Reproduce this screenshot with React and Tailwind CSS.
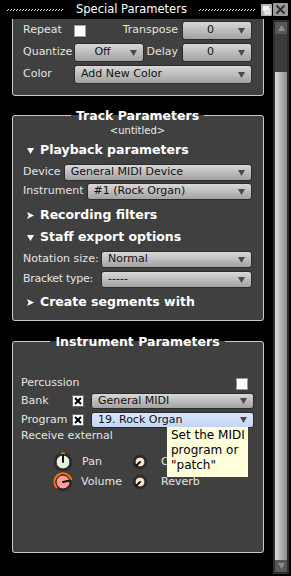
import React from 'react';

const Arrow = () => (
  <svg width="7" height="6" viewBox="0 0 7 6">
    <path d="M0 0H7L3.5 6Z" fill="#4a4a4a" />
  </svg>
);

const Down = () => (
  <svg width="7" height="6" viewBox="0 0 7 6">
    <path d="M0 0H7L3.5 6Z" fill="#ffffff" />
  </svg>
);

const Right = () => (
  <svg width="7" height="7" viewBox="0 0 7 7">
    <path d="M0 0L7 3.5L0 7L1.6 3.5Z" fill="#ffffff" />
  </svg>
);

function Combo({ children, className = '', center = false, blue = false }) {
  return (
    <div
      className={`flex items-center rounded-[3px] border border-[#2c2c2c] text-[11px] text-[#111] ${
        blue ? 'bg-linear-to-b from-[#d9e6fb] to-[#c3d6f5]' : 'bg-linear-to-b from-[#d8d8d8] to-[#a2a2a2]'
      } ${className}`}
    >
      <span className={`flex-1 truncate ${center ? 'text-center' : 'pl-[6px]'}`}>{children}</span>
      <span className="flex pr-[6px]">
        <Arrow />
      </span>
    </div>
  );
}

const Check = () => <div className="w-[12px] h-[12px] bg-white border border-[#9a9a9a]" />;

const XCheck = () => (
  <svg width="12" height="12" viewBox="0 0 12 12">
    <rect x="0.5" y="0.5" width="11" height="11" fill="#fff" stroke="#6a6a6a" />
    <path d="M3 3L9 9M9 3L3 9" stroke="#000" strokeWidth="2" />
  </svg>
);

function Section({ open, children }) {
  return (
    <div className="flex items-center h-[17px] ml-[4px] gap-[6px] text-[12.5px] font-bold text-white">
      {open ? <Down /> : <Right />}
      <span>{children}</span>
    </div>
  );
}

function pt(c, r, a) {
  const t = (a * Math.PI) / 180;
  return [c + r * Math.sin(t), c - r * Math.cos(t)];
}

function arc(c, r, a0, a1) {
  const [x0, y0] = pt(c, r, a0);
  const [x1, y1] = pt(c, r, a1);
  const large = a1 - a0 > 180 ? 1 : 0;
  return `M${x0} ${y0}A${r} ${r} 0 ${large} 1 ${x1} ${y1}`;
}

function Knob({ size, fill, angle, arcFrom, arcTo }) {
  const c = size / 2;
  const [px, py] = pt(c, c - 3, angle);
  return (
    <svg width={size} height={size} viewBox={`0 0 ${size} ${size}`}>
      <circle cx={c} cy={c} r={c - 0.5} fill="#2e2e2e" />
      {arcFrom !== undefined && (
        <path d={arc(c, c - 1.5, arcFrom, arcTo)} stroke="#ff6a10" strokeWidth="2.2" fill="none" />
      )}
      <circle cx={c} cy={c} r={c - 3} fill={fill} stroke="#151515" strokeWidth="1" />
      <line x1={c} y1={c} x2={px} y2={py} stroke="#111" strokeWidth="2" strokeLinecap="round" />
    </svg>
  );
}

const Dots = ({ w }) => (
  <svg width={w} height="4" viewBox={`0 0 ${w} 4`}>
    {Array.from({ length: Math.floor(w / 3) }).map((_, i) => (
      <g key={i} fill="#e8e8e8">
        <rect x={i * 3} y="2" width="1" height="1" />
        <rect x={i * 3 + 1} y="1" width="1" height="1" />
      </g>
    ))}
  </svg>
);

export default function App() {
  return (
    <div className="relative w-[291px] h-[576px] bg-black flex flex-col overflow-hidden font-['DejaVu_Sans',sans-serif] text-[#e4e4e4] text-[11px]">
      {/* title bar */}
      <div className="h-[19px] flex items-center pl-[7px]">
        <Dots w={57} />
        <span className="ml-[12px] text-[11.5px] text-white">Special Parameters</span>
        <span className="ml-[12px] flex">
          <Dots w={57} />
        </span>
        <div className="ml-auto mr-[3px] flex items-center gap-[1px]">
          <svg width="11" height="12" viewBox="0 0 11 12">
            <rect width="11" height="12" rx="1" fill="#b4b4b4" />
            <rect x="2" y="2" width="6" height="5" fill="#f4f4f4" />
            <rect x="4" y="5" width="5" height="5" fill="#dcdcdc" stroke="#f4f4f4" />
          </svg>
          <svg width="15" height="13" viewBox="0 0 15 13">
            <rect width="15" height="13" rx="1" fill="#9a9a9a" />
            <path d="M3.5 2.5L11.5 10.5M11.5 2.5L3.5 10.5" stroke="#2e2e2e" strokeWidth="1.8" />
          </svg>
        </div>
      </div>

      <div className="flex flex-1 min-h-0">
        {/* content */}
        <div className="flex-1 overflow-hidden pl-[12px] pr-[9px]">
          {/* top group */}
          <div className="-mt-[10px] border border-[#c8c8c8] rounded-[3px] bg-[#404040] pt-[11px] pb-[11px] pl-[10px] pr-[11px] flex flex-col gap-[3px]">
            <div className="flex items-center h-[19px]">
              <span className="w-[51px]">Repeat</span>
              <Check />
              <span className="flex-1 text-right mr-[4px]">Transpose</span>
              <Combo center className="w-[70px] h-[19px]">0</Combo>
            </div>
            <div className="flex items-center h-[19px]">
              <span className="w-[51px]">Quantize</span>
              <Combo center className="w-[70px] h-[19px]">Off</Combo>
              <span className="flex-1 text-right mr-[4px]">Delay</span>
              <Combo center className="w-[70px] h-[19px]">0</Combo>
            </div>
            <div className="flex items-center h-[19px]">
              <span className="w-[51px]">Color</span>
              <Combo className="flex-1 h-[19px]">Add New Color</Combo>
            </div>
          </div>

          {/* track parameters */}
          <fieldset className="mt-[12px] border border-[#c8c8c8] rounded-[3px] bg-[#404040] pl-[10px] pr-[11px] pb-[9px]">
            <legend className="mx-auto px-[5px] text-[12.5px] leading-[15px] font-bold text-white">Track Parameters</legend>
            <div className="mt-[1px] h-[14px] leading-[14px] text-center text-[10px] text-[#eee]">&lt;untitled&gt;</div>
            <div className="mt-[4px]">
              <Section open>Playback parameters</Section>
            </div>
            <div className="mt-[5px] flex items-center gap-[3px]">
              <span>Device</span>
              <Combo className="flex-1 h-[17px]">General MIDI Device</Combo>
            </div>
            <div className="mt-[2px] flex items-center gap-[3px]">
              <span>Instrument</span>
              <Combo className="flex-1 h-[17px]">#1 (Rock Organ)</Combo>
            </div>
            <div className="mt-[7px]">
              <Section>Recording filters</Section>
            </div>
            <div className="mt-[5px]">
              <Section open>Staff export options</Section>
            </div>
            <div className="mt-[5px] flex items-center">
              <span className="w-[78px]">Notation size:</span>
              <Combo className="flex-1 h-[17px]">Normal</Combo>
            </div>
            <div className="mt-[3px] flex items-center">
              <span className="w-[78px] tracking-[-0.3px]">Bracket type:</span>
              <Combo className="flex-1 h-[17px]">-----</Combo>
            </div>
            <div className="mt-[6px]">
              <Section>Create segments with</Section>
            </div>
          </fieldset>

          {/* instrument parameters */}
          <fieldset className="mt-[13px] border border-[#c8c8c8] rounded-[3px] bg-[#404040] pl-[8px] pr-[9px] pb-[60px]">
            <legend className="mx-auto px-[5px] text-[12.5px] leading-[15px] font-bold text-white">Instrument Parameters</legend>
            <div className="mt-[28px] h-[13px] flex items-center">
              <span className="flex-1">Percussion</span>
              <span className="mr-[6px]">
                <Check />
              </span>
            </div>
            <div className="mt-[3px] h-[16px] flex items-center">
              <span className="w-[51px]">Bank</span>
              <XCheck />
              <Combo className="ml-[7px] flex-1 h-[16px]">General MIDI</Combo>
            </div>
            <div className="mt-[3px] h-[16px] flex items-center">
              <span className="w-[51px]">Program</span>
              <XCheck />
              <Combo blue className="ml-[7px] flex-1 h-[16px]">19. Rock Organ</Combo>
            </div>
            <div className="mt-[1px] h-[14px] leading-[14px]">Receive external</div>
            <div className="mt-[9px] h-[20px] flex items-center pl-[32px]">
              <Knob size={20} fill="#e6f3dc" angle={0} arcFrom={-12} arcTo={12} />
              <span className="ml-[9px] w-[50px]">Pan</span>
              <Knob size={16} fill="#ffe6d2" angle={-135} />
              <span className="ml-[13px]">Chorus</span>
            </div>
            <div className="h-[20px] flex items-center pl-[32px]">
              <Knob size={20} fill="#ff9c9c" angle={78} arcFrom={-135} arcTo={78} />
              <span className="ml-[8px] w-[51px]">Volume</span>
              <Knob size={16} fill="#ffe6d2" angle={-135} />
              <span className="ml-[13px]">Reverb</span>
            </div>
          </fieldset>
        </div>

        {/* scrollbar */}
        <div className="w-[16px] mr-[2px] mt-[1px] mb-[2px] bg-[#2e2e2e] p-[2px] flex flex-col">
          <div className="h-[12px] bg-[#585858] flex items-center justify-center">
            <svg width="7" height="6" viewBox="0 0 7 6">
              <path d="M3.5 0L7 6H0Z" fill="#8e8e8e" />
            </svg>
          </div>
          <div className="h-[38px] bg-[#3c3c3c]" />
          <div className="flex-1 bg-linear-to-r from-[#dadada] to-[#8e8e8e]" />
          <div className="h-[12px] bg-[#585858] flex items-center justify-center">
            <svg width="7" height="6" viewBox="0 0 7 6">
              <path d="M0 0H7L3.5 6Z" fill="#8e8e8e" />
            </svg>
          </div>
        </div>
      </div>

      {/* tooltip */}
      <div className="absolute left-[167px] top-[427px] w-[81px] h-[50px] bg-[#ffffdc] pl-[4px] pt-[1px] text-[12px] leading-[15px] text-black">
        Set the MIDI
        <br />
        program or
        <br />
        "patch"
      </div>
    </div>
  );
}
